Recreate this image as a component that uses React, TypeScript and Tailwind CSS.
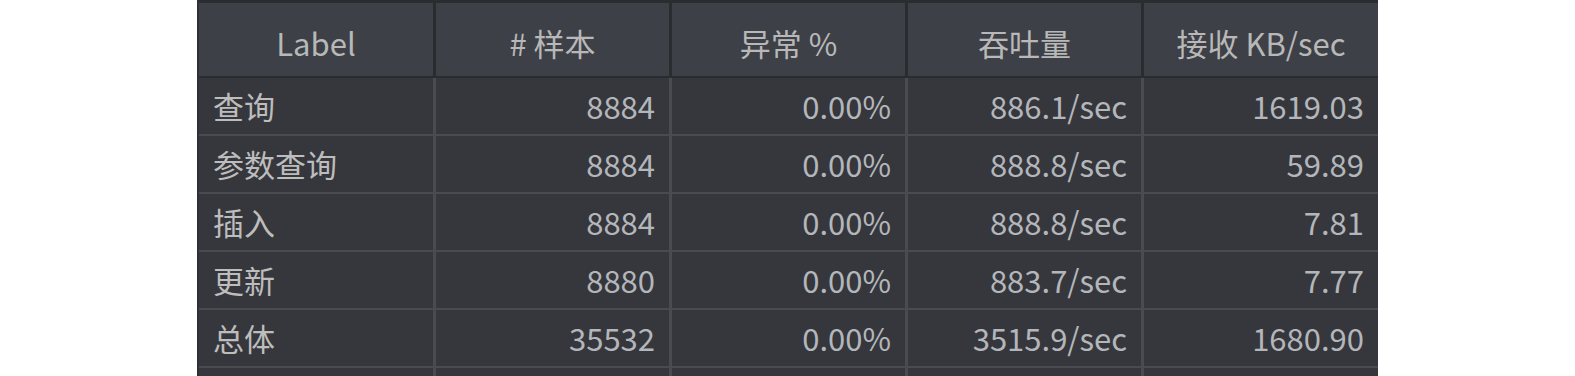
import React from 'react';

const headers = ['Label', '# 样本', '异常 %', '吞吐量', '接收 KB/sec'];

const rows = [
  ['查询', '8884', '0.00%', '886.1/sec', '1619.03'],
  ['参数查询', '8884', '0.00%', '888.8/sec', '59.89'],
  ['插入', '8884', '0.00%', '888.8/sec', '7.81'],
  ['更新', '8880', '0.00%', '883.7/sec', '7.77'],
  ['总体', '35532', '0.00%', '3515.9/sec', '1680.90'],
  ['', '', '', '', ''],
];

const cols = 'grid grid-cols-[234px_236px_236px_236px_237px]';

export default function App() {
  return (
    <div className="min-h-screen bg-white">
      <div
        className="ml-[197px] w-[1181px] border-l-2 border-[#2f3034] bg-[#36373c]"
        style={{ fontFamily: '"Noto Sans CJK SC", "Noto Sans", sans-serif' }}
      >
        {/* header */}
        <div className={`${cols} h-[78px] border-t-[3px] border-b-2 border-[#2b2c30] bg-[#3e4047]`}>
          {headers.map((h, i) => (
            <div
              key={h}
              className={`flex items-center justify-center pt-[8px] text-[31px] text-[#b8b8b8] ${
                i > 0 ? 'border-l-[3px] border-[#2b2c30]' : ''
              }`}
            >
              {h}
            </div>
          ))}
        </div>

        {/* body */}
        {rows.map((r, ri) => (
          <div key={ri} className={`${cols} h-[58px] border-b-2 border-[#4a4b51]`}>
            {r.map((c, ci) => (
              <div
                key={ci}
                className={`flex items-center text-[31px] ${
                  ci === 0
                    ? 'justify-start pl-[14px] text-[#bdbdbd]'
                    : 'justify-end pr-[14px] border-l-[3px] border-[#4a4b51] text-[#b3b6ba]'
                }`}
              >
                {c}
              </div>
            ))}
          </div>
        ))}
      </div>
    </div>
  );
}
